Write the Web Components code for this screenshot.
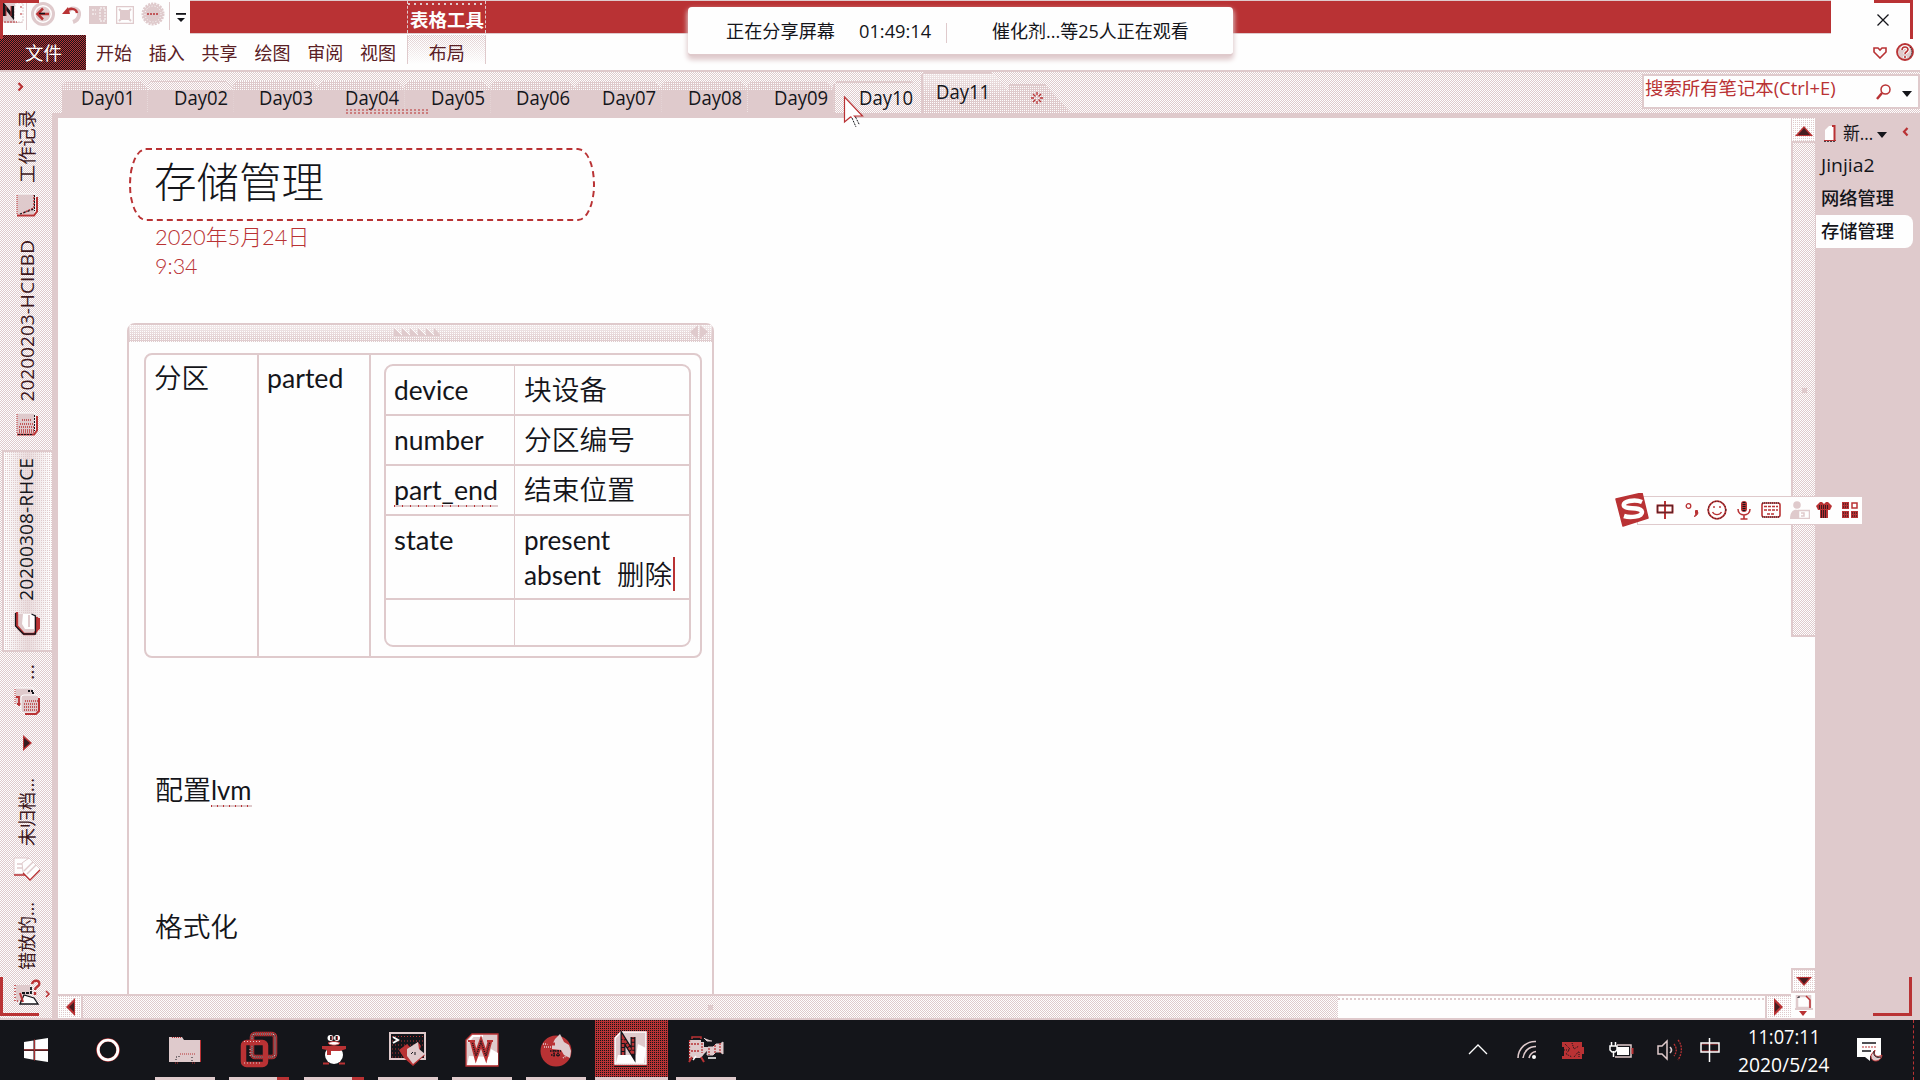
<!DOCTYPE html>
<html lang="zh-CN">
<head>
<meta charset="utf-8">
<title>OneNote</title>
<style>
html{--p:#dfcacc;--r:#b93234;--k:#14151a;--w:#fefefe;
--d50:repeating-conic-gradient(#dfcacc 0 25%,#fefefe 0 50%) 0 0/2px 2px;
--d25:conic-gradient(#dfcacc 25%,#fefefe 0) 0 0/2px 2px;
--d75:conic-gradient(#fefefe 25%,#dfcacc 0) 0 0/2px 2px}
body{margin:0;width:1920px;height:1080px;overflow:hidden;background:var(--w);color:var(--k);font-family:"Open Sans","Noto Sans CJK SC",sans-serif}
</style>
</head>
<body>
<note-app></note-app>
<script>
const R='#b93234',P='#dfcacc',K='#14151a',W='#fefefe';
const ICONS={
app:[22,22,`<rect x="1" y="1" width="20" height="20" rx="2" fill="${P}"/><path d="M13 1h8v19h-9z" fill="${W}" stroke="${P}" stroke-dasharray="2 1"/><path d="M2.500 14V4L10.500 14V4" fill="none" stroke="${K}" stroke-width="3"/><path d="M4 14V4M9 4v10" stroke="${R}"/><path d="M2 20h13M19 4v3M19 11v3" stroke="${R}" stroke-dasharray="2 1"/>`],
back:[24,24,`<circle cx="12" cy="12" r="10.500" fill="${W}" stroke="${P}" stroke-width="3"/><circle cx="12" cy="12" r="7.500" fill="${P}"/><path d="M7 12h11M12 6.500L6.500 12l5.500 5.500" fill="none" stroke="${R}" stroke-width="2.500"/><path d="M8 11.500h6" stroke="${K}" stroke-width="1.500"/>`],
undo:[20,20,`<path d="M6 9c4-7 13-5 12 2c-.5 4-3 6-6 7" fill="none" stroke="${P}" stroke-width="4"/><path d="M5 9C8 3 15 4 16 9" fill="none" stroke="${R}" stroke-width="2.500"/><path d="M1 10L7 3l2 7z" fill="${R}"/>`],
dock:[18,18,`<rect width="18" height="18" fill="${P}"/><path d="M11 2h5v13h-5zM3 4h4M3 8h4" fill="none" stroke="${W}" stroke-dasharray="2 1"/>`],
full:[18,18,`<rect x=".5" y=".5" width="17" height="17" fill="${W}" stroke="${P}" stroke-width="1.500"/><rect x="4" y="4" width="10" height="10" fill="${P}"/><path d="M3 3l4 4M15 3l-4 4M3 15l4-4M15 15l-4-4" stroke="${P}" stroke-width="2"/>`],
more:[24,24,`<circle cx="12" cy="12" r="10" fill="${P}" stroke="${P}" stroke-width="3" stroke-dasharray="2 1"/><circle cx="12" cy="12" r="8" fill="none" stroke="${W}" stroke-dasharray="1 2"/><path d="M6 12h11" stroke="${R}" stroke-width="1.600" stroke-dasharray="2 1"/>`],
drop:[12,10,`<rect x="1" width="10" height="1.800" fill="${K}"/><path d="M2 5h8l-4 4z" fill="${K}"/>`],
close:[14,14,`<path d="M1.500 1.500l11 11M12.500 1.500l-11 11" stroke="${K}" stroke-width="1.300"/>`],
heart:[14,12,`<path d="M1 1h4l2 2 2-2h4v4l-6 6-6-6z" fill="${W}" stroke="${R}" stroke-width="1.600"/>`],
help:[18,18,`<circle cx="9" cy="9" r="8" fill="${P}" stroke="${R}" stroke-width="1.800"/><path d="M6 7c0-4 6-4 6-.5 0 2.500-3 2-3 4.500M9 13v2" fill="none" stroke="${W}" stroke-width="3.500"/><path d="M6 7c0-4 6-4 6-.5 0 2.500-3 2-3 4.500M9 13v2" fill="none" stroke="${R}" stroke-width="1.600"/><path d="M14 4c3 4 2 8-1 11" fill="none" stroke="${K}" stroke-dasharray="1 1"/>`],
search:[15,16,`<circle cx="9.500" cy="5.500" r="4.500" fill="none" stroke="${R}" stroke-width="1.500"/><path d="M6 9l-5 6" stroke="${R}" stroke-width="2.500"/>`],
down:[10,6,`<path d="M0 0h10L5 6z" fill="${K}"/>`],
up:[18,10,`<path d="M0 10L9 0l9 10z" fill="${R}"/><path d="M3 9l6-7 6 7z" fill="${K}" opacity=".7"/>`],
sdown:[16,10,`<path d="M0 0h16L8 9z" fill="${R}"/><path d="M3 1h10L8 7z" fill="${K}" opacity=".7"/>`],
left:[11,19,`<path d="M10 0v18L1 9z" fill="${R}"/><path d="M9 4v10L4 9z" fill="${K}" opacity=".7"/>`],
right:[11,19,`<path d="M1 0v18l9-9z" fill="${R}"/><path d="M2 4v10l5-5z" fill="${K}" opacity=".7"/>`],
pagenav:[18,22,`<rect x="2" y="1" width="13" height="12" fill="${W}" stroke="${P}" stroke-width="2.500"/><path d="M11 1l4 4v8" fill="none" stroke="${R}" stroke-width="1.500"/><path d="M3 3v-1h2" fill="none" stroke="${K}"/><path d="M0 14h18" stroke="${P}" stroke-width="2"/><path d="M4 16h8l-4 5z" fill="${R}"/>`],
newpage:[13,18,`<path d="M1 5l4-4h6v15H1z" fill="${W}"/><path d="M8 1h2.500v14" fill="none" stroke="${R}" stroke-width="2"/><path d="M0 16h12" stroke="${K}" stroke-width="1.500" stroke-dasharray="2 1"/><path d="M0 15.500h12" stroke="${R}"/>`],
chevR:[7,10,`<path d="M1.500 1l3.500 3.800-3.500 3.800" fill="none" stroke="${R}" stroke-width="2.200"/>`],
chevL:[7,10,`<path d="M5.500 1L2 4.800l3.500 3.800" fill="none" stroke="${R}" stroke-width="2.200"/>`],
book:[24,24,`<path d="M1 1h19v21H1z" fill="${P}" stroke="${W}" stroke-width="1"/><path d="M2 2v20" stroke="${R}" stroke-dasharray="1 1"/><path d="M2 22.500h17l3-4V4" fill="none" stroke="${R}" stroke-width="2"/><path d="M8 20l11-5V2" stroke="${R}" stroke-width="1.500" stroke-dasharray="2 1" fill="none"/><path d="M5 21l14-5" stroke="${K}" stroke-width="1.300" stroke-dasharray="2 2" fill="none"/><path d="M19.500 2v16" stroke="${K}" stroke-dasharray="2 1"/>`],
book2:[24,24,`<path d="M1 1h19v21H1z" fill="${P}" stroke="${W}"/><path d="M2 2v20" stroke="${R}" stroke-dasharray="1 1"/><path d="M2 22.500h17l3-4V4" fill="none" stroke="${R}" stroke-width="2"/><path d="M7 8h10M5 12h13M4 15h15M4 18h15M4 20h15" stroke="${R}" stroke-dasharray="1 1" stroke-width="1.300"/><path d="M3 22.500h14M19.500 3v16" stroke="${K}" stroke-dasharray="2 1"/>`],
open:[26,26,`<path d="M3 3h15l6 5v14l-5 2H9l-6-5z" fill="${P}"/><path d="M9 3h11v15H11L8 13z" fill="${W}"/><path d="M3 1v14l7 8h10l3-4V6M22 20l3-3V7" fill="none" stroke="${R}" stroke-width="2.300"/><path d="M1.500 2v13l8 8h12V5l-4-2" fill="none" stroke="${K}" stroke-width="1.300"/><path d="M15 4v12" stroke="${P}" stroke-width="2"/>`],
stack:[28,28,`<path d="M2 1h18v17H2z" fill="${P}" stroke="${W}"/><path d="M2 2v16" stroke="${R}" stroke-dasharray="1 1"/><path d="M3 10h3v9M4 17h6" fill="none" stroke="${R}" stroke-width="1.800"/><path d="M15 4h5v4" stroke="${K}" fill="none" stroke-width="2" stroke-dasharray="2 1"/><rect x="8" y="8" width="18" height="18" rx="3" fill="${P}" stroke="${W}"/><path d="M12 14h13M11 17h14M11 20h14M11 23h14" stroke="${R}" stroke-width="1.500" stroke-dasharray="1 1"/><path d="M26 11v13l-3 3H12" fill="none" stroke="${R}" stroke-width="2"/>`],
tri:[11,16,`<path d="M1 0v16l9-8z" fill="${R}"/><path d="M2 3v10l6-5z" fill="${K}" opacity=".8"/>`],
notes:[28,26,`<path d="M1 2h14v16H1z" fill="${W}" stroke="${P}"/><path d="M1 19h12" stroke="${R}" stroke-width="1.500"/><path d="M9 7l7-5 11 11-10 11-7-8z" fill="${W}" stroke="${P}"/><path d="M11 15l9-9M14 18l9-9M4 8h5M4 12h5" stroke="${P}" stroke-width="1.500"/><path d="M10 17l7 7 10-10" fill="none" stroke="${R}" stroke-width="1.300"/>`],
lost:[40,28,`<path d="M3 6h14v16H3z" fill="${P}"/><path d="M2 6v16h6" fill="none" stroke="${R}" stroke-width="1.500" stroke-dasharray="1 2"/><path d="M9 14h9v-6" fill="none" stroke="${K}" stroke-width="1.800" stroke-dasharray="3 1"/><path d="M7 25l4-9 10 3 4 6z" fill="${W}" stroke="${K}" stroke-width="1.300"/><path d="M7 14l3 9" stroke="${R}" stroke-width="2"/><path d="M19 5c1-5 9-4 7 1-1 2-4 2-4 5M22 13v3" fill="none" stroke="${R}" stroke-width="2.400"/><path d="M33 12l3 3-3 3" fill="none" stroke="${R}" stroke-width="1.500"/>`],
star:[12,12,`<g stroke="${R}" stroke-width="1.300" fill="none"><path d="M6 0v3M6 9v3M0 6h3M9 6h3M2 2l2.500 2.500M7.500 7.500L10 10M10 2L7.500 4.500M4.500 7.500L2 10"/></g>`],
cursor:[22,32,`<path d="M1.500 1v25l6-5 5 10 4-2-5-9h8z" fill="${W}"/><path d="M9 21.500L7.500 21l-6 5V1l18 19h-8l1 1" fill="none" stroke="${R}" stroke-width="1.200"/><path d="M9 22l4 9M12.500 21l4 8" stroke="${K}" stroke-dasharray="2 1"/>`],
win:[24,24,`<path d="M0 4l9.500-1.500v8.800H0zM11.200 2L24 0v11.300H11.200zM0 13h9.500v8.800L0 20zM11.200 13H24v11l-12.800-2z" fill="${W}"/><path d="M10.400 1.500v21M0 11.900h24" stroke="${R}"/>`],
ring:[24,24,`<circle cx="12" cy="12" r="10" fill="none" stroke="${R}" stroke-width="3.600"/><circle cx="12" cy="12" r="9.800" fill="none" stroke="${W}" stroke-width="2.800"/>`],
folder:[34,28,`<path d="M1 1h13l2 3h16v22H1z" fill="${P}"/><path d="M32.500 4v22" stroke="${R}"/><path d="M12 18h15M4 1.500h10M7 27h4M24 27h4" fill="none" stroke="${R}" stroke-dasharray="1 1"/><path d="M8 24v-3h3v-3M24 25v-4" stroke="${K}" fill="none" stroke-dasharray="1 2"/>`],
vm:[38,37,`<rect x="12" y="3" width="23" height="23" rx="3" fill="none" stroke="${R}" stroke-width="4.500"/><rect x="12" y="3" width="23" height="23" rx="3" fill="none" stroke="${K}" stroke-width="2.500" stroke-dasharray="1 1"/><rect x="12" y="3" width="23" height="23" rx="3" fill="none" stroke="${P}" stroke-width="1.200" stroke-dasharray="1 1"/><rect x="3.500" y="11.500" width="22" height="22" rx="3" fill="none" stroke="${R}" stroke-width="5.500"/><path d="M4 10.500h18M4 32h18M10 18v9" stroke="${P}" stroke-dasharray="1 2"/>`],
qq:[24,32,`<ellipse cx="12" cy="21" rx="9" ry="9" fill="${W}"/><circle cx="8.500" cy="4" r="3" fill="${W}"/><circle cx="15" cy="4" r="3" fill="${W}"/><path d="M9 2v4M14.500 2v4" stroke="${K}" stroke-width="1.800"/><path d="M10 2v4M15.500 2v4" stroke="${R}"/><path d="M6 9c3-2 9-2 12 0-2 3-10 3-12 0z" fill="${W}" stroke="${R}"/><path d="M0 12h24v3l-6 2-9 0v4H5v-5l-5-1z" fill="${R}"/><path d="M1 29.500h6M17 29.500h6" stroke="${R}" stroke-width="2"/>`],
term:[38,36,`<rect x="1" y="1" width="35" height="26" fill="${K}" stroke="${P}" stroke-width="2"/><path d="M3 4.500h31M3 9h31M3 13h31M3 17h20M3 21h20M3 25h20" stroke="${R}" stroke-dasharray="1 2"/><path d="M4 5l5 3-5 3" fill="none" stroke="${W}" stroke-width="2"/><path d="M10 18l8-6 4 4 7-6 3 4-2 6 6 3-12 11-9-8z" fill="${R}"/><path d="M18 17l11-7 1 7 6 5-12 10-6-8z" fill="${P}"/><path d="M22 22l2-2M26 20v3" stroke="${K}"/>`],
word:[34,34,`<path d="M1 33V7l6-6h26v32z" fill="${P}" stroke="${R}" stroke-width="1.300"/><path d="M2 32l2-9 20 1 2-8 7 4v12z" fill="${W}"/><path d="M3 9l5-6h10" stroke="${W}" stroke-width="2" fill="none"/><path d="M7 8l4 15 5-14 5 14 4-15" fill="none" stroke="${R}" stroke-width="4.500"/><path d="M7 8l4 15 5-14 5 14 4-15" fill="none" stroke="${K}" stroke-width="1.500" stroke-dasharray="1 1"/><path d="M3 8h7M22 8h6" stroke="${R}" stroke-width="2"/>`],
fox:[34,34,`<circle cx="17" cy="18" r="15.500" fill="${R}"/><path d="M13 12L16 6l5-5 4 8 5 3 2 6-1 7-6-3-3-5-9-1z" fill="${P}"/><path d="M5 14h11M4 11h9M24 25l6-4" stroke="${P}" stroke-width="1.500" stroke-dasharray="1 1"/><path d="M8 7l2 4 6 0" fill="none" stroke="${R}" stroke-width="3"/><path d="M11 18h11M12 22h9M15 17v7M19 17v7" stroke="${K}" stroke-width="1.600" stroke-dasharray="1.500 1"/>`],
note:[34,38,`<path d="M1 33V7l6-6h25v32z" fill="${P}" stroke="${W}" stroke-width="1.500"/><path d="M2 32l2-8h18l2-11 8 4-2 15z" fill="${W}"/><path d="M9 24V7l10 16V6" fill="none" stroke="${K}" stroke-width="5"/><path d="M9 24V7l10 16V6" fill="none" stroke="${R}" stroke-width="2.500" stroke-dasharray="3 1"/><path d="M1 35.500h31" stroke="${K}"/>`],
cam:[36,28,`<path d="M4 3V1h9v2" fill="none" stroke="${R}" stroke-width="1.500"/><path d="M1 4h12v2h3v5h4v3l-4 4-3 4H1z" fill="${P}"/><path d="M16 2l3 3h5M20 11h5l3-3h4l3-2v12l-3-2h-4l-3 3h-6z" fill="${P}" stroke="${P}"/><path d="M1.500 4v20M3 8h9M3 15h9M14 7v10M27 9v8M32 7v10M21 12v7" stroke="${R}" stroke-width="1.300" stroke-dasharray="2 1"/><path d="M4 21l-3 5M13 21l3 5" stroke="${R}" stroke-width="2"/><path d="M20 22h8M5 24l3-4" stroke="${W}" stroke-width="1.500"/>`],
chevU:[20,12,`<path d="M1 11L10 2l9 9" fill="none" stroke="${W}" stroke-width="1.300"/>`],
wifi:[20,20,`<g fill="none" stroke="${P}" stroke-width="1.600"><path d="M1 18C1 9 9 1 19 1.500M6 18C7 11 12 6.500 19 6.500M12 18c1-4 3-6 7-6.500"/></g><circle cx="17" cy="17" r="2" fill="${W}"/>`],
chip:[24,20,`<path d="M1 2h20v5h2v7h-2v5H1v-3h2V7H1z" fill="${R}"/><path d="M4 4l5 5-4 5 6 3M11 3l2 6 5-3M13 17l5-6M3 10h5M18 12v6" stroke="${K}" fill="none" stroke-dasharray="1 1"/>`],
batt:[26,18,`<path d="M8 4h14v12H6" fill="none" stroke="${P}" stroke-width="1.500"/><rect x="8" y="6" width="12" height="8" fill="${W}"/><path d="M23.500 7v6" stroke="${R}" stroke-width="2"/><path d="M1 5h7v4l-2 2H3L1 9zM2.500 1v4M6.500 1v4M4.500 10v6" fill="${K}" stroke="${W}" stroke-width="1.500"/>`],
sound:[26,22,`<path d="M1 7h4l5-5v18l-5-5H1z" fill="none" stroke="${P}" stroke-width="1.500"/><path d="M13 8c2 2 2 4 0 6" fill="none" stroke="${P}" stroke-width="1.600"/><path d="M17 5c3 4 3 8 0 12M21 1c5 6 4 14 0 20" fill="none" stroke="${R}" stroke-width="1.300" stroke-dasharray="2 1"/>`],
zhongw:[20,24,`<path d="M1 6h18M1 13h18" stroke="${R}"/><path d="M1 5h18v9H1zM9.500 0v24" fill="none" stroke="${W}" stroke-width="1.500"/>`],
notif:[26,26,`<path d="M0 1h24v18H13v5l-5-4H0z" fill="${W}"/><path d="M5 6h14M5 14h9" stroke="${K}" stroke-width="1.500"/><path d="M5 10h14" stroke="${R}" stroke-dasharray="2 1"/><path d="M18 13c-2 6 2 8 7 5-1 8-12 8-11 0z" fill="${P}" stroke="${R}"/><path d="M17 14c-1 6 3 7 7 6" fill="none" stroke="${K}"/>`],
sogou:[34,34,`<path d="M1 6L27 0l6 25L8 33z" fill="${R}" stroke="${R}" stroke-linejoin="round" stroke-width="1.500"/><path d="M27 9c-7-3-20-1-18 4 2 4 17 0 18 6 0 5-12 6-18 4" fill="none" stroke="${W}" stroke-width="4.500"/>`],
zhong:[18,18,`<path d="M1.500 4.500h15v7h-15zM9 0v18" fill="none" stroke="${R}" stroke-width="2"/><path d="M1.500 4.500h15v7h-15z" fill="none" stroke="${K}" stroke-width="1.300" stroke-dasharray="1 1"/>`],
punct:[14,16,`<circle cx="3.500" cy="4" r="2.300" fill="none" stroke="${R}" stroke-width="1.300"/><path d="M12 9c2 2 0 5-3 5.500M10.500 8.500h2v3h-2z" fill="${R}" stroke="${R}"/>`],
smile:[20,20,`<circle cx="10" cy="10" r="8.800" fill="${W}" stroke="${R}" stroke-width="1.800"/><circle cx="10" cy="10" r="8.800" fill="none" stroke="${K}" stroke-dasharray="1 2"/><path d="M5.500 12c2 3.500 7 3.500 9 0M7 6v2M13 6v2" fill="none" stroke="${R}" stroke-width="1.400"/>`],
mic:[14,20,`<rect x="4" y="1" width="6" height="11" rx="3" fill="${R}"/><path d="M7 2v9" stroke="${K}" stroke-width="3" stroke-dasharray="1 1"/><path d="M1 9c0 8 12 8 12 0M7 15v4M3.500 19h7" fill="none" stroke="${R}" stroke-width="1.600"/>`],
kbd:[20,16,`<rect x="1" y="1" width="18" height="14" rx="2" fill="${W}" stroke="${R}" stroke-width="1.600"/><path d="M3 4.500h14M3 8h14M6 12h8" stroke="${R}" stroke-width="1.300" stroke-dasharray="3 1"/><path d="M1 1h18M1 15h18" stroke="${K}" stroke-dasharray="1 1"/>`],
person:[20,18,`<circle cx="7" cy="4" r="3.800" fill="${P}"/><path d="M0 18c0-12 9-10 11-7v7z" fill="${P}"/><rect x="8.500" y="9.500" width="11" height="8" fill="${W}" stroke="${P}" stroke-width="1.500"/><path d="M11 12h3v3h-3" stroke="${P}" stroke-width="1.500" fill="none"/>`],
shirt:[18,18,`<path d="M5 1h2l2 2 2-2h2l4 4-2 4h-2v8H5V9H3L1 5z" fill="${R}"/><path d="M4 5h10M4 7h10M6 10h6M6 12h6M6 14h6M6 16h6" stroke="${K}" stroke-width="1.400" stroke-dasharray="1 1"/>`],
grid:[16,16,`<path d="M0 0h7v7H0zM0 9h7v7H0zM9 9h7v7H9z" fill="${R}"/><path d="M1 2h5M1 5h5M1 11h5M1 14h5M10 11h5M10 14h5" stroke="${K}" stroke-dasharray="1 1"/><rect x="10" y="1" width="5" height="5" fill="${W}" stroke="${R}" stroke-width="1.500"/>`],
grip:[46,8,`<path d="M0 0l8 8H0zM8 0l8 8H8zM16 0l8 8h-8zM24 0l8 8h-8zM32 0l8 8h-8zM40 0l7 8h-7z" fill="${P}"/><path d="M1 0l7 7M9 0l7 7M17 0l7 7M25 0l7 7M33 0l7 7" stroke="${W}"/>`],
resize:[18,14,`<path d="M8 0v14L0 7zM10 0v14l8-7z" fill="${P}"/>`]
};
const def=(tag,css,html)=>customElements.define(tag,class extends HTMLElement{
  constructor(){super();this.attachShadow({mode:'open'}).innerHTML='<style>*{box-sizing:border-box}:host{box-sizing:border-box}'+css+'</style>'+html;}
});
customElements.define('ui-icon',class extends HTMLElement{
  connectedCallback(){
    if(this.shadowRoot)return;
    const [w,h,s]=ICONS[this.getAttribute('name')];
    this.attachShadow({mode:'open'}).innerHTML=`<style>:host{display:block;flex:none;width:${w}px;height:${h}px}svg{display:block}</style><svg width="${w}" height="${h}" viewBox="0 0 ${w} ${h}">${s}</svg>`;
  }
});
/* One line of text stretched or squeezed to the width in its "w" attribute. */
customElements.define('fit-text',class extends HTMLElement{
  connectedCallback(){
    if(this.shadowRoot)return;
    const w=+this.getAttribute('w'),s=this.getAttribute('size')||18,v=this.hasAttribute('vertical');
    this.attachShadow({mode:'open'}).innerHTML=`<style>:host{display:block;flex:none;font-size:${s}px;line-height:${Math.round(s*1.3)}px;${v?'height':'width'}:${w}px;white-space:pre;${v?'writing-mode:vertical-rl;text-orientation:sideways;':''}}span{display:inline-block;transform-origin:${v?'50% 0':'0 50%'}}</style><span><slot></slot></span>`;
    const el=this.shadowRoot.querySelector('span'),n=v?el.offsetHeight:el.offsetWidth;
    if(v){el.style.transformOrigin='50% 50%';el.style.transform=`translateY(${(w-n)/2}px) rotate(180deg) scaleY(${w/n})`}
    else el.style.transform=`scaleX(${w/n})`;
  }
});

def('title-bar',`:host{display:flex;height:35px;width:1920px;background:var(--w)}
.q{display:flex;width:190px;padding:2px 0 0 2px}
.q>*{margin-right:var(--g,0)}
.sep{width:1px;height:28px;background:var(--p)}
.bar{width:1641px;height:34px;background:var(--r);border-top:1px solid var(--p);border-bottom:1px solid var(--p);padding-left:217px}
.ctx{width:79px;height:32px;border:1px dashed var(--p);border-width:0 1px;color:var(--w);font-weight:700;padding:8px 0 0 2px;background:radial-gradient(circle at 1px 1px,var(--p) .8px,transparent 1px) 0 2px/6px 4px repeat-x}
.x{padding:13px 0 0 45px}`,
`<div class="q"><ui-icon name="app" style="--g:2px"></ui-icon><div class="sep" style="--g:4px"></div><ui-icon name="back" style="--g:6px"></ui-icon><ui-icon name="undo" style="--g:8px;margin-top:2px"></ui-icon><ui-icon name="dock" style="--g:9px;margin-top:4px"></ui-icon><ui-icon name="full" style="--g:7px;margin-top:4px"></ui-icon><ui-icon name="more" style="--g:4px"></ui-icon><div class="sep" style="--g:5px"></div><ui-icon name="drop" style="margin-top:11px"></ui-icon></div>
<div class="bar"><div class="ctx"><fit-text w="74" size="18">表格工具</fit-text></div></div><div class="x"><ui-icon name="close"></ui-icon></div>`);

def('ribbon-tabs',`:host{display:flex;height:37px;border-bottom:2px solid var(--p);background:var(--w);color:#5a2025}
.file{width:86px;height:35px;background:repeating-conic-gradient(#b93234 0 25%,#14151a 0 50%) 0 0/2px 2px;color:var(--w);padding:7px 0 0 25px;margin-right:10px}
fit-text{margin:7px 16.800px 0 0}
.file fit-text{margin:0}
.lay{width:79px;height:29px;background:linear-gradient(transparent,var(--w)),var(--d50);border:1px solid var(--p);border-width:0 1px;padding-left:21px;margin-left:-6px}
.r{margin:12px 0 0 auto;padding-right:6px;display:flex;gap:9px}
.r ui-icon+ui-icon{margin-top:-4px}`,
`<div class="file"><fit-text w="37">文件</fit-text></div><fit-text w="36">开始</fit-text><fit-text w="36">插入</fit-text><fit-text w="36">共享</fit-text><fit-text w="36">绘图</fit-text><fit-text w="36">审阅</fit-text><fit-text w="36">视图</fit-text><div class="lay"><fit-text w="36">布局</fit-text></div><div class="r"><ui-icon name="heart"></ui-icon><ui-icon name="help"></ui-icon></div>`);

def('section-tab',`:host{display:block;width:85.700px;height:32px;padding:4px 0 0 var(--in,26px);background:linear-gradient(transparent 9px,var(--p) 9px),var(--d75);clip-path:polygon(0 4px,4px 0,78px 0,85.700px 8px,85.700px 32px,0 32px);flex:none}
:host([light]){background:linear-gradient(var(--p),var(--p)) 0 0/100% 1px no-repeat,linear-gradient(transparent 9px,var(--p) 9px),var(--d50)}
:host([pale]){background:linear-gradient(var(--p),var(--p)) 0 0/100% 2px no-repeat,linear-gradient(var(--p),var(--p)) 0 0/2px 100% no-repeat,var(--d50)}
:host([active]){position:relative;z-index:1;width:108px;height:41px;padding-top:7px;background:linear-gradient(var(--p),var(--p)) 0 0/100% 2px no-repeat,linear-gradient(var(--p),var(--p)) 0 0/2px 100% no-repeat,linear-gradient(#fefefe88,transparent 60%),var(--d75);clip-path:polygon(0 3px,3px 0,70px 0,76px 5px,104px 41px,0 41px)}
:host([new]){width:64px;height:29px;margin-left:-20px;padding:8px 0 0 22px;background:linear-gradient(var(--p),var(--p)) 0 0/100% 1px no-repeat,var(--d75);clip-path:polygon(0 0,36px 0,62px 29px,0 29px)}`,`<slot></slot>`);

def('section-tabs',`:host{display:flex;height:46px;border-bottom:5px solid var(--p);background:var(--d50);align-items:flex-end;padding-left:10px;position:relative}
.s{width:278px;height:35px;border:2px solid var(--p);background:var(--w);margin:0 0 4px auto;display:flex;padding:1px 0 0 1px;color:var(--r)}
.dots{position:absolute;left:294px;top:37px;width:82px;height:5px;background:radial-gradient(circle at 1px 1px,var(--r) .6px,transparent .9px) 0 0/4px 3px;opacity:.8}
.cur{position:absolute;left:791px;top:24px}`,
[1,2,3,4,5,6,7,8,9,10].map(i=>`<section-tab ${i==1?'style="--in:19px"':''}${i==2?' light':i==10?' pale':''}><fit-text w="54" size="19.500">Day${String(i).padStart(2,'0')}</fit-text></section-tab>`).join('')+
`<section-tab active style="--in:15px;margin-left:2px"><fit-text w="54" size="19.500">Day11</fit-text></section-tab><section-tab new><ui-icon name="star"></ui-icon></section-tab><div class="s"><fit-text w="191" size="18">搜索所有笔记本(Ctrl+E)</fit-text><ui-icon name="search" style="margin:7px 11px 0 40px"></ui-icon><ui-icon name="down" style="margin-top:14px"></ui-icon></div><div class="dots"></div><ui-icon class="cur" name="cursor"></ui-icon>`);

def('notebook-nav',`:host{display:flex;flex-direction:column;width:52px;height:946px;background:var(--d50);flex:none;color:#3d171c}
.it{display:flex;flex-direction:column;align-items:center;padding-left:2px;flex:none}
.sel{margin-left:2px;width:50px;height:202px;border:2px solid var(--p);border-right:0;padding:6px 3px 0 0;background:linear-gradient(90deg,transparent,#dfcaccaa,transparent),var(--d25);color:var(--k)}`,
`<div class="it" style="height:378px;padding-top:10px"><ui-icon name="chevR" style="margin:0 14px 18px 0"></ui-icon><fit-text vertical w="73">工作记录</fit-text><ui-icon name="book" style="margin:10px 0 23px"></ui-icon><fit-text vertical w="161">20200203-HCIEBD</fit-text><ui-icon name="book2" style="margin-top:11px"></ui-icon></div>
<div class="it sel"><fit-text vertical w="143">20200308-RHCE</fit-text><ui-icon name="open" style="margin-top:10px"></ui-icon></div>
<div class="it" style="padding-top:12px"><fit-text vertical w="16">…</fit-text><ui-icon name="stack" style="margin:7px 0 20px"></ui-icon><ui-icon name="tri"></ui-icon><fit-text vertical w="68" style="margin-top:27px">未归档…</fit-text><ui-icon name="notes" style="margin:10px 0 20px"></ui-icon><fit-text vertical w="68">错放的…</fit-text><ui-icon name="lost" style="margin:9px 0 0 11px"></ui-icon></div>`);

def('note-table',`:host{display:block;margin:11px 0 0 15px;width:558px;height:305px;border:2px solid var(--p);border-radius:8px}
.o{display:grid;grid-template-columns:113px 112px 1fr;height:301px}
.o>div{border-right:2px solid var(--p);padding:5px 0 0 8px}
.o>div:last-child{border:0;padding:9px 9px 0 13px}
.i{display:grid;grid-template-columns:129px 1fr;grid-template-rows:50px 50px 50px 84px 1fr;height:283px;border:2px solid var(--p);border-radius:9px}
.i>div{border-bottom:2px solid var(--p);padding:6px 0 0 9px}
.i>div:nth-child(odd){border-right:1px solid var(--p);padding-left:8px}
.i>div:nth-last-child(-n+2){border-bottom:0}
.row{display:flex}
.z{font-weight:350}
.sp{background:repeating-linear-gradient(90deg,var(--r) 0 1px,var(--p) 1px 8px) 0 100%/100% 2px no-repeat}
.caret{width:1.500px;height:34px;background:var(--r);margin-left:1px}`,
`<div class="o"><div><fit-text class="z" w="55" size="27">分区</fit-text></div><div><fit-text w="76" size="27">parted</fit-text></div><div><div class="i">
<div><fit-text w="74" size="27">device</fit-text></div><div><fit-text class="z" w="83" size="27">块设备</fit-text></div>
<div><fit-text w="90" size="27">number</fit-text></div><div><fit-text class="z" w="111" size="27">分区编号</fit-text></div>
<div><fit-text class="sp" w="104" size="27">part_end</fit-text></div><div><fit-text class="z" w="111" size="27">结束位置</fit-text></div>
<div><fit-text w="59" size="27">state</fit-text></div><div><fit-text w="86" size="27">present</fit-text><div class="row"><fit-text w="77" size="27" style="margin-right:16px">absent</fit-text><fit-text class="z" w="55" size="27">删除</fit-text><div class="caret"></div></div></div>
<div></div><div></div></div></div></div>`);

def('note-page',`:host{display:block;width:1733px;height:876px;background:var(--w);padding:30px 0 0 71px;overflow:hidden;font-family:Lato,"Noto Sans CJK SC",sans-serif;font-weight:400}
.t{width:466px;height:73px;border:2px dashed var(--r);border-radius:17px/36px;padding:5px 0 0 23px;font-weight:300}
.d{padding:1px 0 0 26px;color:var(--r);font-weight:300;height:102px}
.c{width:587px;height:700px;margin-left:-2px;border:2px solid var(--p);border-radius:8px 8px 0 0}
.h{height:17px;background:linear-gradient(#fefefe99,transparent),var(--d75);display:flex;align-items:flex-start;padding-left:265px}
.h ui-icon{margin-top:3px}.h ui-icon+ui-icon{margin:0 0 0 250px}
.l{display:flex;margin-left:26px}
.z{font-weight:350}
.sp{background:repeating-linear-gradient(90deg,var(--r) 0 1px,var(--p) 1px 6px) 0 100%/100% 2px no-repeat}`,
`<div class="t"><fit-text w="170" size="42">存储管理</fit-text></div><div class="d"><fit-text w="154" size="22">2020年5月24日</fit-text><fit-text w="43" size="22">9:34</fit-text></div>
<div class="c"><div class="h"><ui-icon name="grip"></ui-icon><ui-icon name="resize"></ui-icon></div><note-table></note-table><div class="l" style="margin-top:114px"><fit-text class="z" w="56" size="27">配置</fit-text><fit-text class="sp" w="41" size="27">lvm</fit-text></div><div class="l" style="margin-top:102px"><fit-text class="z" w="83" size="27">格式化</fit-text></div></div>`);

def('h-scroll',`:host{display:flex;width:1733px;height:24px;border-top:2px solid var(--p);background:var(--w)}
.b{width:25px;background:var(--d25);border-right:2px solid var(--p);padding:2px 0 0 7px}
.m{width:1255px;background:var(--d50);padding:9px 0 0 625px}.m i{display:block;width:5px;height:5px;background:var(--p)}
.f{flex:1;background:radial-gradient(circle at 1px 1px,var(--p) .8px,transparent 1px) 0 2px/4px 3px repeat-x}
.e{width:26px;border-left:2px solid var(--p);border-right:0;padding-left:6px}`,
`<div class="b"><ui-icon name="left"></ui-icon></div><div class="m"><i></i></div><div class="f"></div><div class="b e"><ui-icon name="right"></ui-icon></div>`);
def('v-scroll',`:host{display:flex;flex-direction:column;width:24px;height:900px;background:var(--w)}
.b{height:25px;background:var(--d25);border:2px solid var(--p);border-width:0 0 2px 1px;padding:8px 0 0 3px}
.m{height:494px;background:var(--d50);border:1px solid var(--p);border-width:0 0 2px 2px;padding:245px 0 0 9px}.m i{display:block;width:5px;height:5px;background:var(--p)}
.f{height:331px}
.e{border:2px solid var(--p);border-right-width:0;padding-top:7px}
.n{padding:2px 0 0 4px}`,
`<div class="b"><ui-icon name="up"></ui-icon></div><div class="m"><i></i></div><div class="f"></div><div class="b e"><ui-icon name="sdown"></ui-icon></div><div class="n"><ui-icon name="pagenav"></ui-icon></div>`);
def('page-list',`:host{display:block;width:105px;height:900px;background:var(--p)}
.n{display:flex;padding:4px 0 0 9px;height:31px}
.p{height:33px;padding:4px 0 0 6px;width:98px}
.z{padding-top:5px;font-weight:500}
.on{background:var(--w);border-radius:0 8px 8px 0;margin-left:1px;padding-left:5px;width:97px}`,
`<div class="n"><ui-icon name="newpage" style="margin:3px 6px 0 0"></ui-icon><fit-text w="30">新...</fit-text><ui-icon name="down" style="margin:10px 15px 0 4px"></ui-icon><ui-icon name="chevL" style="margin-top:5px"></ui-icon></div><div class="p"><fit-text w="54" size="19">Jinjia2</fit-text></div><div class="p z"><fit-text w="73" size="18">网络管理</fit-text></div><div class="p z on"><fit-text w="73" size="18">存储管理</fit-text></div>`);

def('share-pill',`:host{position:absolute;left:688px;top:7px;width:545px;height:49px;background:var(--w);border-radius:4px;box-shadow:0 3px 5px 1px #dfcacc;border-bottom:2px solid var(--p);display:flex;padding:13px 0 0 38px}
i{width:1px;height:20px;margin:3px 45px 0 15px;background:var(--p)}`,
`<fit-text w="109" size="18" style="margin-right:24px">正在分享屏幕</fit-text><fit-text w="72" size="19" style="margin-top:-1px">01:49:14</fit-text><i></i><fit-text w="197" size="18">催化剂...等25人正在观看</fit-text>`);
def('ime-bar',`:host{position:absolute;left:1615px;top:493px;width:248px;height:34px;display:flex;align-items:center}
.b{width:225px;height:29px;margin-left:-12px;background:var(--w);border:1px solid var(--p);border-right:0;display:flex;align-items:center;padding-left:18px}
ui-icon[name=sogou]{position:relative}`,
`<ui-icon name="sogou"></ui-icon><div class="b"><ui-icon name="zhong"></ui-icon><ui-icon name="punct" style="margin-left:11px"></ui-icon><ui-icon name="smile" style="margin-left:8px"></ui-icon><ui-icon name="mic" style="margin-left:10px"></ui-icon><ui-icon name="kbd" style="margin-left:10px"></ui-icon><ui-icon name="person" style="margin-left:9px"></ui-icon><ui-icon name="shirt" style="margin-left:5px"></ui-icon><ui-icon name="grid" style="margin-left:9px"></ui-icon></div>`);

def('task-button',`:host{display:flex;flex-direction:column;align-items:center;justify-content:center;height:60px;flex:none;width:60px;border-bottom:3px solid var(--p);padding-top:2px}
:host([more]){border-image:linear-gradient(90deg,#dfcacc 46px,#b93234 46px) 3}
:host([on]){width:73px;background:conic-gradient(#14151a 25%,#b93234 0) 0 0/2px 2px}`,`<slot></slot>`);
def('task-bar',`:host{display:flex;width:1920px;height:60px;background:var(--k);color:var(--w);align-items:center}
.a{display:flex;gap:14.300px}
.st{display:flex;width:155px;align-items:center;padding-left:24px;gap:48px;flex:none}
.r{display:flex;align-items:center;margin-left:732px;height:60px}
.ck{display:flex;flex-direction:column;align-items:center;gap:3px;margin-left:18px;width:91px}
.end{width:1px;height:60px;border-left:1px dashed var(--r);margin-left:30px}`,
`<div class="st"><ui-icon name="win"></ui-icon><ui-icon name="ring"></ui-icon></div><div class="a"><task-button><ui-icon name="folder"></ui-icon></task-button><task-button more><ui-icon name="vm"></ui-icon></task-button><task-button more><ui-icon name="qq"></ui-icon></task-button><task-button><ui-icon name="term"></ui-icon></task-button><task-button><ui-icon name="word"></ui-icon></task-button><task-button><ui-icon name="fox"></ui-icon></task-button><task-button on style="margin:0 -6px"><ui-icon name="note"></ui-icon></task-button><task-button><ui-icon name="cam"></ui-icon></task-button></div>
<div class="r"><ui-icon name="chevU" style="margin-top:-2px"></ui-icon><ui-icon name="wifi" style="margin-left:29px"></ui-icon><ui-icon name="chip" style="margin-left:24px"></ui-icon><ui-icon name="batt" style="margin-left:24px"></ui-icon><ui-icon name="sound" style="margin-left:22px"></ui-icon><ui-icon name="zhongw" style="margin-left:17px"></ui-icon><div class="ck"><fit-text w="72" size="19.500">11:07:11</fit-text><fit-text w="91" size="19.500">2020/5/24</fit-text></div><ui-icon name="notif" style="margin-left:28px"></ui-icon><div class="end"></div></div>`);

def('frame-corner',`:host{position:absolute;width:39px;height:39px;border:0 solid var(--r)}`,``);
def('note-app',`:host{display:block;position:relative;width:1920px;height:1080px;overflow:hidden}
.b{display:flex;height:948px;border-bottom:2px solid var(--p)}
.m{display:flex;flex-direction:column}.c{display:flex;border-left:6px solid var(--p)}
section-tabs{width:1868px}`,
`<title-bar></title-bar><ribbon-tabs></ribbon-tabs><div class="b"><notebook-nav></notebook-nav><div class="m"><section-tabs></section-tabs><div class="c"><div><note-page></note-page><h-scroll></h-scroll></div><v-scroll></v-scroll><page-list></page-list></div></div></div><task-bar></task-bar>
<share-pill></share-pill><ime-bar></ime-bar>
<frame-corner style="left:0;top:0;border-width:3px 0 0 3px"></frame-corner><frame-corner style="left:1874px;top:0;border-width:3px 3px 0 0"></frame-corner><frame-corner style="left:0;top:977px;border-width:0 0 3px 3px"></frame-corner><frame-corner style="left:1873px;top:977px;border-width:0 3px 3px 0"></frame-corner>`);
</script>
</body>
</html>
